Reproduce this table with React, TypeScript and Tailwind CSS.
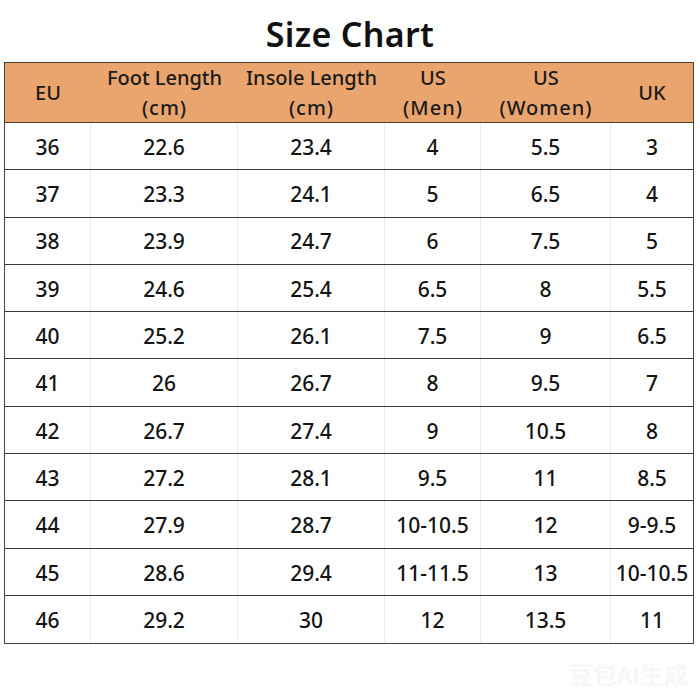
import React from "react";

const rows = [
  ["36", "22.6", "23.4", "4", "5.5", "3"],
  ["37", "23.3", "24.1", "5", "6.5", "4"],
  ["38", "23.9", "24.7", "6", "7.5", "5"],
  ["39", "24.6", "25.4", "6.5", "8", "5.5"],
  ["40", "25.2", "26.1", "7.5", "9", "6.5"],
  ["41", "26", "26.7", "8", "9.5", "7"],
  ["42", "26.7", "27.4", "9", "10.5", "8"],
  ["43", "27.2", "28.1", "9.5", "11", "8.5"],
  ["44", "27.9", "28.7", "10-10.5", "12", "9-9.5"],
  ["45", "28.6", "29.4", "11-11.5", "13", "10-10.5"],
  ["46", "29.2", "30", "12", "13.5", "11"],
];

const headers: string[][] = [
  ["EU"],
  ["Foot Length", "(cm)"],
  ["Insole Length", "(cm)"],
  ["US", "(Men)"],
  ["US", "(Women)"],
  ["UK"],
];

const grid = "grid grid-cols-[86px_147px_147px_96px_130px_82px]";

export default function App() {
  return (
    <div
      className="w-[700px] h-[700px] bg-white relative overflow-hidden"
      style={{ fontFamily: '"Noto Sans", "Open Sans", sans-serif' }}
    >
      <div className="h-[62px] flex items-center justify-center pt-[6px]">
        <h1 className="text-[34px] font-semibold text-[#111] leading-none tracking-[0.3px]">
          Size Chart
        </h1>
      </div>
      <div className="ml-[4px] w-[690px] border-[1.5px] border-[#4a4038]">
        <div className={`${grid} h-[60px] bg-[#eaa56e] border-b-[1.5px] border-[#4a4038]`}>
          {headers.map((h, i) => (
            <div
              key={i}
              className="flex flex-col items-center justify-center text-[20px] font-medium text-[#1a1a1a] leading-[30px] pb-[1px]"
            >
              {h.map((t, j) => (
                <span key={j} className={j === 1 ? "tracking-[1px]" : ""}>
                  {t}
                </span>
              ))}
            </div>
          ))}
        </div>
        {rows.map((r, ri) => (
          <div
            key={ri}
            className={`${grid} h-[47.3px] ${ri < rows.length - 1 ? "border-b-[1.5px] border-[#3a3a3a]" : ""}`}
          >
            {r.map((c, ci) => (
              <div
                key={ci}
                className={`flex items-center justify-center pt-[3px] text-[21px] font-medium text-[#141414] ${ci < 5 ? "border-r border-[#ececec]" : ""}`}
              >
                {c}
              </div>
            ))}
          </div>
        ))}
      </div>
      <div
        className="absolute right-[12px] bottom-[14px] text-[24px] font-bold text-[#f7f7f7] leading-none"
        style={{ fontFamily: '"Noto Sans CJK SC", sans-serif' }}
      >
        豆包AI生成
      </div>
    </div>
  );
}
